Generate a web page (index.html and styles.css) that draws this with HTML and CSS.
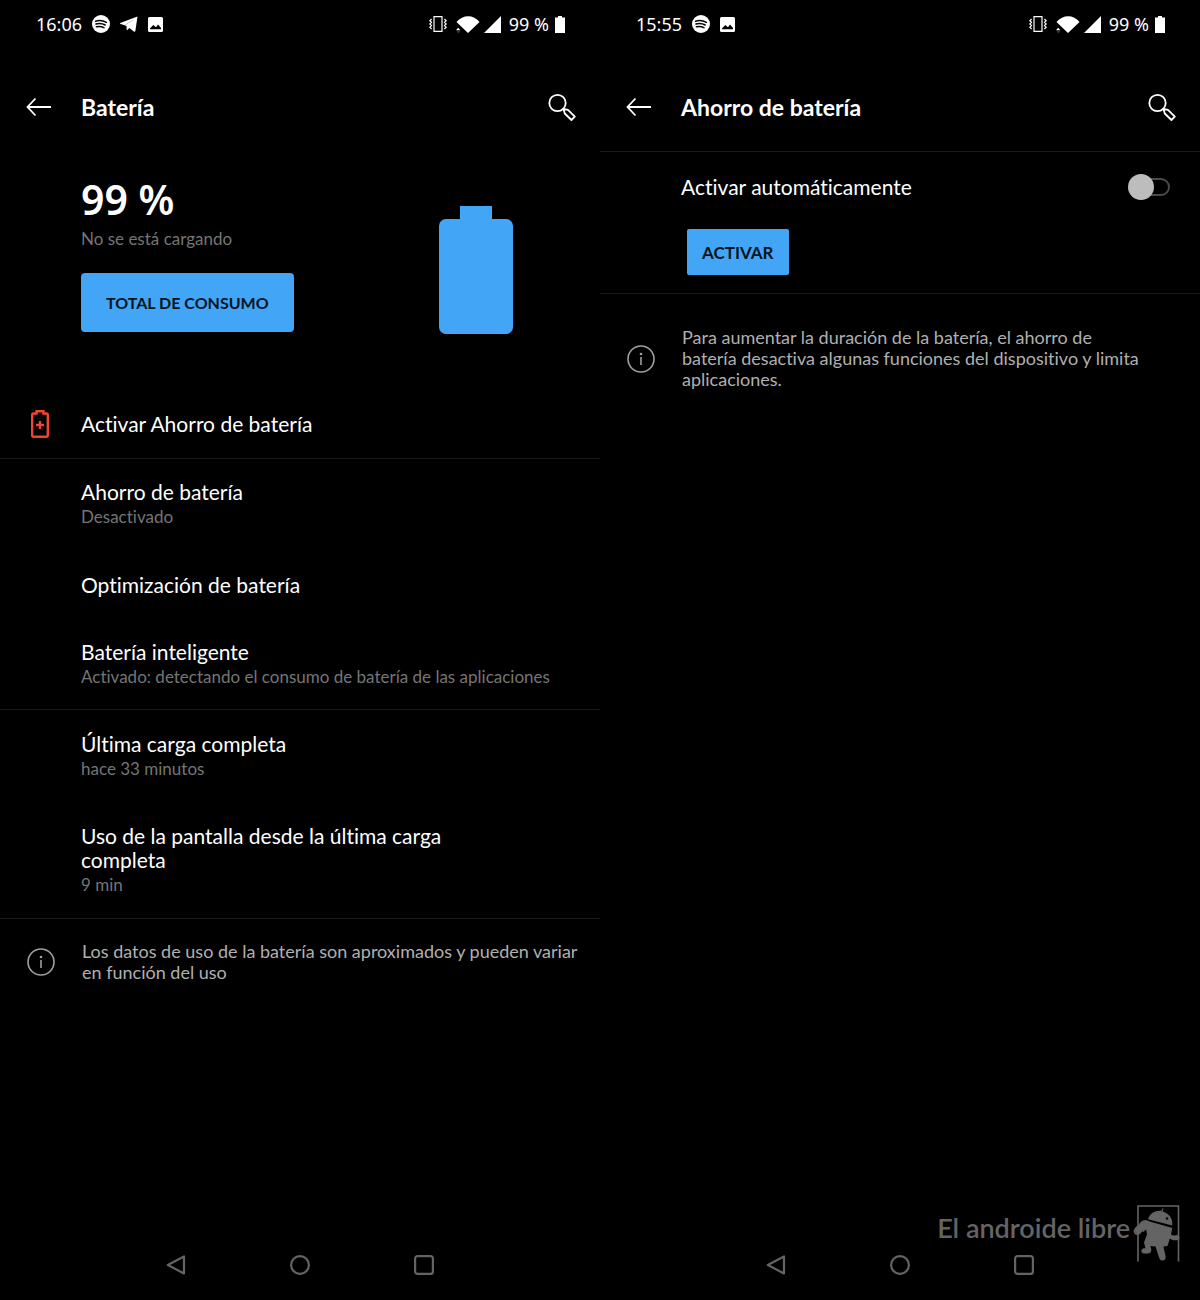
FILE: index.html
```html
<!DOCTYPE html>
<html lang="es">
<head>
    <meta charset="UTF-8">
    <meta name="viewport" content="width=device-width, initial-scale=1.0">
    <title>Ahorro de batería</title>
    <link rel="stylesheet" href="styles.css">
</head>
<body>
    <!-- shared icons -->
    <svg class="sprite" aria-hidden="true">
        <symbol id="spotify" viewBox="0 0 18 18">
            <circle cx="9" cy="9" r="9" fill="#fff"/>
            <path d="M3.6 6.2c3.6-1 7.6-.6 10.8 1.1M4 9c3-.8 6.3-.5 9.2 1M4.400 11.700c2.600-.6 5.200-.3 7.600.9" fill="none" stroke="#000" stroke-width="1.5" stroke-linecap="round"/>
        </symbol>
        <symbol id="telegram" viewBox="0 0 18 16">
            <path d="M17.5.4 15.4 14.8c-.1.9-.8 1.1-1.5.6L9.300 12l-2.500 2.600-.3-4.100L14 3.500 4.700 9.300.6 8c-.8-.3-.8-.9.2-1.300z" fill="#fff"/>
            <path d="m4.700 9.300 9.300-5.800-5 8z" fill="#fff"/>
        </symbol>
        <symbol id="picture" viewBox="0 0 15 15">
            <path d="M1.500 0h12A1.500 1.500 0 0 1 15 1.500v12a1.500 1.500 0 0 1-1.500 1.500h-12A1.500 1.500 0 0 1 0 13.500v-12A1.500 1.500 0 0 1 1.500 0zM2 12.200h11V11L10 7.600 8 10.200 5.200 8 2 11.400z" fill="#fff" fill-rule="evenodd"/>
        </symbol>
        <symbol id="vibrate" viewBox="0 0 18 16">
            <path d="M5 .6h8v14.800H5zM2.600 3 .8 4.700l1.700 1.600L.8 8l1.700 1.600L.8 11.300l1.800 1.700M15.400 3l1.800 1.700-1.700 1.600L17.200 8l-1.700 1.600 1.700 1.700-1.800 1.700" fill="none" stroke="#fff" stroke-width="1.2"/>
        </symbol>
        <symbol id="wifi" viewBox="0 0 24 17">
            <path d="M.5 6C7-1.800 17.500-1.800 23.500 6L12 17zM0 14.200h4.400L2.200 11.800z" fill="#fff"/>
            <path d="M.8 15.500h3.400l-1.700 1.200z" fill="#777"/>
        </symbol>
        <symbol id="signal" viewBox="0 0 17 17">
            <path d="M17 0v17H0z" fill="#fff"/>
        </symbol>
        <symbol id="charge" viewBox="0 0 10 17">
            <path d="M3 0h4v1.500h3V17H0V1.500h3z" fill="#fff"/>
        </symbol>
        <symbol id="back" viewBox="0 0 26 20">
            <path d="M9.500 1.500 1.500 10l8 8.500M1.500 10H25" fill="none" stroke="#fff" stroke-width="1.800"/>
        </symbol>
        <symbol id="search" viewBox="0 0 28 28">
            <circle cx="9.500" cy="10" r="8.200" fill="none" stroke="#fff" stroke-width="1.800"/>
            <path d="m15.300 15.800 4.700 1.100 6.800 6.700-3.400 3.400-6.600-6.500z" fill="none" stroke="#fff" stroke-width="1.800" stroke-linejoin="round"/>
        </symbol>
        <symbol id="info" viewBox="0 0 28 28">
            <circle cx="14" cy="14" r="13" fill="none" stroke="#a0a0a0" stroke-width="1.600"/>
            <path d="M14 12v8" stroke="#a0a0a0" stroke-width="1.600"/>
            <circle cx="14" cy="9" r="1.300" fill="#a0a0a0"/>
        </symbol>
        <symbol id="nav-back" viewBox="0 0 20 20">
            <path d="M18 1.500v17L1.800 10z" fill="none" stroke="#646464" stroke-width="2.200" stroke-linejoin="round"/>
        </symbol>
        <symbol id="nav-home" viewBox="0 0 20 20">
            <circle cx="10" cy="10" r="8.900" fill="none" stroke="#646464" stroke-width="2.200"/>
        </symbol>
        <symbol id="nav-recent" viewBox="0 0 20 20">
            <rect x="1.100" y="1.100" width="17.800" height="17.800" rx="2.500" fill="none" stroke="#646464" stroke-width="2.200"/>
        </symbol>
    </svg>

    <div class="screens">
        <main class="screen">
            <div class="status-bar">
                <span>16:06</span>
                <svg width="18" height="18"><use href="#spotify"/></svg>
                <svg width="18" height="16"><use href="#telegram"/></svg>
                <svg width="15" height="15"><use href="#picture"/></svg>
                <div class="status-right">
                    <svg width="18" height="16"><use href="#vibrate"/></svg>
                    <svg width="24" height="17"><use href="#wifi"/></svg>
                    <svg width="17" height="17"><use href="#signal"/></svg>
                    <span class="level">99 %</span>
                    <svg width="10" height="17"><use href="#charge"/></svg>
                </div>
            </div>
            <header class="app-bar">
                <button class="icon-button" aria-label="Atrás"><svg width="26" height="20"><use href="#back"/></svg></button>
                <h1>Batería</h1>
                <button class="icon-button" aria-label="Buscar"><svg width="28" height="28"><use href="#search"/></svg></button>
            </header>

            <section class="summary">
                <div>
                    <div class="percent">99 %</div>
                    <div class="sub">No se está cargando</div>
                    <button class="button button-large">TOTAL DE CONSUMO</button>
                </div>
                <svg class="battery" width="74" height="128" viewBox="0 0 74 128">
                    <path d="M21 0h32v13h14a7 7 0 0 1 7 7v101a7 7 0 0 1-7 7H7a7 7 0 0 1-7-7V20a7 7 0 0 1 7-7h14z" fill="#42a5f5"/>
                </svg>
            </section>

            <section class="group">
                <a class="row" href="#">
                    <svg class="row-icon" width="18" height="28" viewBox="0 0 18 28">
                        <path d="M5.500 3.500V1.200h7v2.300h2.800a1.500 1.500 0 0 1 1.500 1.500v20.300a1.500 1.500 0 0 1-1.500 1.500H2.700a1.500 1.500 0 0 1-1.500-1.500V5a1.500 1.500 0 0 1 1.500-1.500z" fill="none" stroke="#f44336" stroke-width="2.400"/>
                        <path d="M9 11v8M5 15h8" stroke="#f44336" stroke-width="2.400"/>
                    </svg>
                    <div class="title">Activar Ahorro de batería</div>
                </a>
            </section>
            <section class="group">
                <a class="row" href="#">
                    <div class="title">Ahorro de batería</div>
                    <div class="sub">Desactivado</div>
                </a>
                <a class="row" href="#">
                    <div class="title">Optimización de batería</div>
                </a>
                <a class="row" href="#">
                    <div class="title">Batería inteligente</div>
                    <div class="sub">Activado: detectando el consumo de batería de las aplicaciones</div>
                </a>
            </section>
            <section class="group stats">
                <div class="row">
                    <div class="title">Última carga completa</div>
                    <div class="sub">hace 33 minutos</div>
                </div>
                <div class="row">
                    <div class="title">Uso de la pantalla desde la última carga completa</div>
                    <div class="sub">9 min</div>
                </div>
            </section>
            <div class="note">
                <svg width="28" height="28"><use href="#info"/></svg>
                <p>Los datos de uso de la batería son aproximados y pueden variar en función del uso</p>
            </div>

            <nav class="nav-bar">
                <button class="icon-button" aria-label="Atrás"><svg width="20" height="20"><use href="#nav-back"/></svg></button>
                <button class="icon-button" aria-label="Inicio"><svg width="20" height="20"><use href="#nav-home"/></svg></button>
                <button class="icon-button" aria-label="Recientes"><svg width="20" height="20"><use href="#nav-recent"/></svg></button>
            </nav>
        </main>

        <main class="screen">
            <div class="status-bar">
                <span>15:55</span>
                <svg width="18" height="18"><use href="#spotify"/></svg>
                <svg width="15" height="15"><use href="#picture"/></svg>
                <div class="status-right">
                    <svg width="18" height="16"><use href="#vibrate"/></svg>
                    <svg width="24" height="17"><use href="#wifi"/></svg>
                    <svg width="17" height="17"><use href="#signal"/></svg>
                    <span class="level">99 %</span>
                    <svg width="10" height="17"><use href="#charge"/></svg>
                </div>
            </div>
            <header class="app-bar">
                <button class="icon-button" aria-label="Atrás"><svg width="26" height="20"><use href="#back"/></svg></button>
                <h1>Ahorro de batería</h1>
                <button class="icon-button" aria-label="Buscar"><svg width="28" height="28"><use href="#search"/></svg></button>
            </header>

            <section class="saver">
                <div class="switch-row">
                    <label class="title" for="auto">Activar automáticamente</label>
                    <input class="switch" type="checkbox" role="switch" id="auto">
                </div>
                <button class="button">ACTIVAR</button>
            </section>
            <div class="note note-saver">
                <svg width="28" height="28"><use href="#info"/></svg>
                <p>Para aumentar la duración de la batería, el ahorro de batería desactiva algunas funciones del dispositivo y limita aplicaciones.</p>
            </div>

            <nav class="nav-bar">
                <button class="icon-button" aria-label="Atrás"><svg width="20" height="20"><use href="#nav-back"/></svg></button>
                <button class="icon-button" aria-label="Inicio"><svg width="20" height="20"><use href="#nav-home"/></svg></button>
                <button class="icon-button" aria-label="Recientes"><svg width="20" height="20"><use href="#nav-recent"/></svg></button>
            </nav>

            <div class="watermark">
                <span>El androide libre</span>
                <svg width="48" height="58" viewBox="0 0 48 58">
                    <path d="M6 57.500V2h40.500v55.500" fill="none" stroke="#646464" stroke-width="1.600"/>
                    <!-- head -->
                    <path d="M16 15.200C18 9 24 6.200 29.500 7l1-2.800 1 .3-.8 2.900C37 9.500 41 14 40.300 21.500z" fill="#646464"/>
                    <circle cx="35" cy="14.500" r="1.200" fill="#000"/>
                    <!-- body, arms and legs -->
                    <path d="M16 17 40.300 24 39 30.500c2.500 1.500 4 1 7 .5 2 1 2 4.500 0 5-4 .8-6 .2-8.200-1.500L35.500 42 31.500 42.500c.5 4 2 7.500 2.200 11 0 4-5.500 4-6.500.5l-3.700-11.500-5-.5.8 3.500c.2 2.500-1.300 4-3.800 4H12c-3.500-.3-3.500-5 0-5.300h1.500L12 38.500l3-8-.8-5-3 2.500-2-1.500z" fill="#646464"/>
                    <path d="M16.500 17.300C13 16 9.500 16.500 8 19.500l-4.500 6C2.500 28 4.500 30.500 7.500 30l6-7z" fill="#646464" stroke="#646464"/>
                    <path d="M5 22.500 2.500 26c-.8 2 .5 4 2.800 4.500" fill="none" stroke="#646464" stroke-width="1.400"/>
                </svg>
            </div>
        </main>
    </div>
</body>
</html>
```
FILE: styles.css
```css
* {
    box-sizing: border-box;
}

body {
    margin: 0;
    background-color: #000;
    color: #fff;
    font-family: Lato, "Open Sans", sans-serif;
    font-variant-ligatures: none;
}

h1,
p {
    margin: 0;
}

svg {
    display: block;
    flex-shrink: 0;
}

.sprite {
    display: none;
}

.screens {
    display: grid;
    grid-template-columns: 1fr 1fr;
    min-height: 100vh;
}

.screen {
    position: relative;
    display: flex;
    flex-direction: column;
    min-width: 0;
}

/* status bar */
.status-bar {
    display: flex;
    align-items: center;
    gap: 10px;
    height: 48px;
    padding: 0 35px 0 36px;
    font-family: "Noto Sans", "Open Sans", sans-serif;
    font-size: 18px;
}

.status-right {
    display: flex;
    align-items: center;
    gap: 4px;
    margin-left: auto;
}

.status-right svg:first-child {
    margin-right: 5px;
}

.level {
    margin: 0 2px 0 4px;
}

/* app bar */
.app-bar {
    display: flex;
    align-items: center;
    height: 104px;
    padding: 14px 24px 0 26px;
    border-bottom: 1px solid #1a1a1a;
}

.app-bar h1 {
    flex: 1;
    margin-left: 29px;
    font-size: 23px;
    font-weight: 700;
    line-height: 28px;
}

.icon-button {
    padding: 0;
    border: none;
    background: none;
    cursor: pointer;
}

/* battery summary */
.screen:first-child .app-bar {
    border-color: #000;
}

.summary {
    display: flex;
    justify-content: space-between;
    align-items: flex-start;
    padding: 23px 87px 54px 81px;
}

.percent {
    font-family: "Noto Sans", "Open Sans", sans-serif;
    font-size: 41px;
    font-weight: 600;
    line-height: 48px;
}

.battery {
    margin-top: 31px;
}

.sub {
    font-size: 17px;
    line-height: 26px;
    color: #757575;
}

.summary .sub {
    margin: 3px 0 21px;
}

.button {
    height: 46px;
    padding: 0 15px;
    border: none;
    border-radius: 2px;
    background-color: #42a5f5;
    color: #06141f;
    font-family: inherit;
    font-size: 17px;
    font-weight: 700;
    cursor: pointer;
}

.button-large {
    height: 59px;
    padding: 0 25px;
    border-radius: 4px;
    font-size: 16px;
}

/* list */
.group {
    border-bottom: 1px solid #1a1a1a;
}

.row {
    position: relative;
    display: flex;
    flex-direction: column;
    justify-content: center;
    min-height: 70px;
    padding: 21px 40px 19px 81px;
    color: inherit;
    text-decoration: none;
}

.stats .row {
    padding: 22px 120px 20px 81px;
}

.row-icon {
    position: absolute;
    left: 31px;
}

.title {
    font-size: 21px;
    line-height: 24px;
}

.note {
    display: flex;
    align-items: center;
    gap: 27px;
    padding: 22px 12px 22px 27px;
    font-size: 18px;
    line-height: 21px;
    color: #b0b0b0;
}

.note-saver {
    padding: 33px 52px 33px 27px;
}

/* battery saver */
.saver {
    padding: 23px 30px 18px 81px;
    border-bottom: 1px solid #1a1a1a;
}

.switch-row {
    display: flex;
    justify-content: space-between;
    align-items: center;
    margin-bottom: 30px;
}

.saver .button {
    margin-left: 6px;
}

.switch {
    position: relative;
    appearance: none;
    width: 36px;
    height: 18px;
    margin: 0;
    border: 2px solid #4a4a4a;
    border-radius: 9px;
    cursor: pointer;
}

.switch::before {
    content: "";
    position: absolute;
    top: -6px;
    left: -8px;
    width: 26px;
    height: 26px;
    border-radius: 50%;
    background-color: #bdbdbd;
}

.switch:checked::before {
    left: 14px;
    background-color: #42a5f5;
}

/* navigation */
.nav-bar {
    display: flex;
    justify-content: center;
    gap: 104px;
    margin-top: auto;
    padding: 20px 0 25px;
}

.watermark {
    position: absolute;
    right: 20px;
    bottom: 38px;
    display: flex;
    align-items: center;
    gap: 2px;
    color: #646464;
    font-size: 27px;
    font-weight: 600;
    line-height: 34px;
}

.watermark span {
    margin-bottom: 10px;
}
```
